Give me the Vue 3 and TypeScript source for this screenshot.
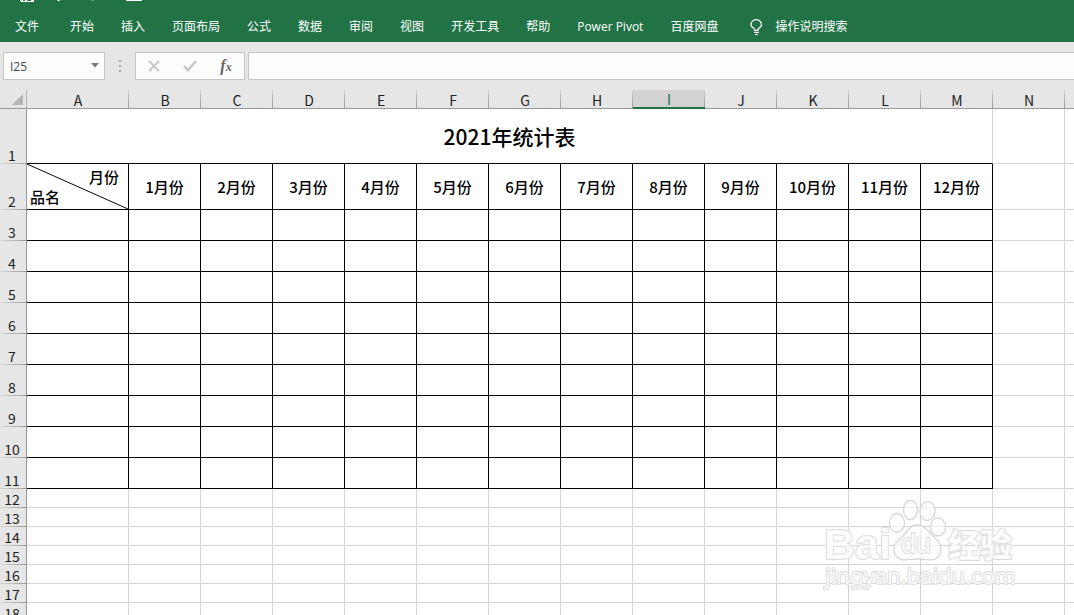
<script setup lang="ts">
import { ref } from 'vue'

interface Row {
  n: number
  kind: 'tall' | 'short'
}

const tabs: string[] = ['文件', '开始', '插入', '页面布局', '公式', '数据', '审阅', '视图', '开发工具', '帮助', 'Power Pivot', '百度网盘']
const columns: string[] = 'ABCDEFGHIJKLMN'.split('')
const months: string[] = Array.from({ length: 12 }, (_, i) => `${i + 1}月份`)
const rows: Row[] = Array.from({ length: 16 }, (_, i) => {
  const n = i + 3
  return { n, kind: n <= 11 ? 'tall' : 'short' }
})
const cellName = ref('I25')
const formula = ref('')
</script>

<template>
  <div class="app">
    <header class="ribbon">
      <svg class="quick" width="160" height="3" viewBox="0 0 160 3" aria-hidden="true">
        <path d="M20 0h14v2h-13zM57 0h3v1h-2zM126 0h16v1h-16z" fill="#fff" />
        <path d="M23 0h2v1h-2zM27 0h4v1h-4z" fill="#217346" />
        <path d="M91 0h3v1h-3z" fill="#5c9a78" />
      </svg>
      <nav class="tabs">
        <button v-for="t in tabs" :key="t" type="button" class="tab">{{ t }}</button>
        <button type="button" class="tab tell">
          <svg width="13" height="17" viewBox="0 0 13 17" fill="none" stroke="#fff" aria-hidden="true">
            <path d="M4.500 11.500v-1.300C3.200 8.800 1 7.900 1 5.700a5.200 5 0 0 1 10.500 0c0 2.200-2.200 3.100-3.500 4.500v1.300z" stroke-width="1.300" />
            <path d="M4 13.500h5M5 15.500h3" />
          </svg>
          <span>操作说明搜索</span>
        </button>
      </nav>
    </header>

    <div class="formula-bar">
      <div class="name-box">
        <input v-model="cellName" type="text" aria-label="名称框" />
        <button type="button" aria-label="展开名称框">
          <svg width="8" height="6" viewBox="0 0 8 6"><path d="M0 0h8L4 4.500z" fill="#777" /></svg>
        </button>
      </div>
      <svg class="grip" width="2" height="12" viewBox="0 0 2 12" fill="#a6a6a6" aria-hidden="true">
        <path d="M0 0h2v2H0zM0 5h2v2H0zM0 10h2v2H0z" />
      </svg>
      <div class="actions">
        <button type="button" aria-label="取消">
          <svg width="12" height="12" viewBox="0 0 12 12"><path d="M1 1l10 10M11 1L1 11" stroke="#c4c4c4" stroke-width="1.800" /></svg>
        </button>
        <button type="button" aria-label="输入">
          <svg width="14" height="12" viewBox="0 0 14 12"><path d="M1 6l4 4.200L13 1" fill="none" stroke="#c4c4c4" stroke-width="2.400" /></svg>
        </button>
        <button type="button" class="fx" aria-label="插入函数"><i>f</i><i class="x">x</i></button>
      </div>
      <input v-model="formula" class="formula" type="text" aria-label="编辑栏" />
    </div>

    <main class="sheet">
      <table>
        <colgroup>
          <col class="c-num" />
          <col class="c-first" />
          <col v-for="c in 13" :key="c" class="c-std" />
          <col />
        </colgroup>
        <thead>
          <tr>
            <th class="corner"><svg width="12" height="12" viewBox="0 0 12 12" aria-hidden="true"><path d="M11 0v11H0z" fill="#b2b2b2" /></svg></th>
            <th v-for="c in columns" :key="c" scope="col" class="col" :class="{ active: c === 'I' }">{{ c }}</th>
            <th class="col last"></th>
          </tr>
        </thead>
        <tbody>
          <tr class="title">
            <th scope="row" class="num">1</th>
            <td colspan="13" class="heading">2021年统计表</td>
            <td></td>
            <td></td>
          </tr>
          <tr class="head">
            <th scope="row" class="num">2</th>
            <td class="ink split">
              <svg viewBox="0 0 102 46" preserveAspectRatio="none" aria-hidden="true"><path d="M0 0L102 46" stroke="#000" /></svg>
              <div class="labels"><span class="top">月份</span><span>品名</span></div>
            </td>
            <td v-for="m in months" :key="m" class="ink">{{ m }}</td>
            <td></td>
            <td></td>
          </tr>
          <tr v-for="r in rows" :key="r.n" :class="r.kind">
            <th scope="row" class="num">{{ r.n }}</th>
            <td v-for="c in 13" :key="c" :class="{ ink: r.kind === 'tall' }"></td>
            <td></td>
            <td></td>
          </tr>
        </tbody>
      </table>

      <svg class="watermark" width="200" height="100" viewBox="0 0 200 100" aria-hidden="true">
        <g fill="#fff" fill-opacity="0.6" stroke="#d6d6d6" stroke-width="1.300">
          <ellipse cx="74" cy="27" rx="7.500" ry="9.500" />
          <ellipse cx="87.500" cy="14" rx="7" ry="9.700" />
          <ellipse cx="104.500" cy="15" rx="7.500" ry="9.500" transform="rotate(8 104.500 15)" />
          <ellipse cx="115" cy="31" rx="7.500" ry="9" />
          <path d="M94 29c-8 0-10 8-16 13-6 4-9 10-6 16 4 9 14 5 22 5s19 4 23-5c3-7 0-12-5-16-6-5-9-13-18-13z" />
        </g>
        <g class="outline">
          <text x="1" y="63" font-size="43" class="latin">Bai</text>
          <text x="78" y="57" font-size="27" class="latin du">du</text>
          <text x="125" y="61" font-size="32" class="cjk">经验</text>
          <text x="2" y="88" font-size="22" class="url">jingyan.baidu.com</text>
        </g>
      </svg>
    </main>
  </div>
</template>

<style>
body {
  margin: 0;
}
</style>

<style scoped>
.app {
  height: 100vh;
  display: flex;
  flex-direction: column;
  overflow: hidden;
  background: #e6e6e6;
  color: #000;
  font-family: "Noto Sans CJK SC", "Noto Sans", sans-serif;
}
button, input {
  font: inherit;
  color: inherit;
  border: 0;
  padding: 0;
  background: none;
}
.ribbon {
  flex: none;
  height: 42px;
  background: #217346;
  color: #fff;
  display: flex;
  flex-direction: column;
}
.quick {
  display: block;
}
.tabs {
  display: flex;
  align-items: center;
  gap: 27px;
  padding: 14px 0 0 15px;
  font-family: "Open Sans", "Noto Sans CJK SC", sans-serif;
  font-size: 12px;
  line-height: 20px;
}
.tab {
  white-space: nowrap;
}
.tab:first-child {
  margin-right: 4px;
}
.tell {
  display: flex;
  align-items: center;
  gap: 12px;
  margin-left: 5px;
}
.formula-bar {
  flex: none;
  display: flex;
  align-items: center;
  padding: 10px 0 10px 3px;
}
.name-box, .actions, .formula {
  box-sizing: border-box;
  height: 28px;
  border: 1px solid #c6c6c6;
  background: #fdfdfd;
}
.name-box {
  width: 102px;
  display: flex;
  align-items: center;
  padding: 0 5px 0 6px;
}
.name-box input {
  flex: 1;
  min-width: 0;
  font-family: "Open Sans", sans-serif;
  font-size: 12px;
  color: #444;
}
.name-box button {
  display: flex;
}
.grip {
  margin: 0 14px;
}
.actions {
  width: 110px;
  display: flex;
  align-items: center;
}
.actions button {
  flex: 1;
  display: flex;
  align-items: center;
  justify-content: center;
}
.actions .fx {
  font-family: "Liberation Serif", serif;
  font-size: 16px;
  line-height: 16px;
  font-weight: bold;
  color: #666;
}
.fx .x {
  font-size: 12px;
  padding-top: 2px;
}
.formula {
  flex: 1;
  min-width: 0;
  margin-left: 3px;
  padding: 0 6px;
  border-right: 0;
  font-size: 12px;
}
.sheet {
  flex: 1;
  min-height: 0;
  overflow: hidden;
  position: relative;
}
table {
  width: 100%;
  table-layout: fixed;
  border-collapse: separate;
  border-spacing: 0;
  background: #fff;
}
.c-num {
  width: 27px;
}
.c-first {
  width: 102px;
}
.c-std {
  width: 72px;
}
th, td {
  box-sizing: border-box;
  padding: 0;
  font-weight: normal;
}
td {
  border-right: 1px solid #d4d4d4;
  border-bottom: 1px solid #d4d4d4;
  text-align: center;
  font-size: 15px;
  line-height: 20px;
}
td:last-child {
  border-right: 0;
}
thead th {
  height: 19px;
  background: #e6e6e6;
  border-bottom: 1px solid #999;
}
.corner {
  text-align: right;
  border-right: 1px solid #b2b2b2;
}
.corner svg {
  display: block;
  margin: 2px 2px 0 auto;
}
.col {
  font-size: 14px;
  line-height: 16px;
  padding-top: 2px;
  color: #222;
  background: linear-gradient(#d0d0d0, #999) right / 1px 100% no-repeat #e6e6e6;
}
.col.last {
  background: #e6e6e6;
}
.col.active {
  background-color: #d2d2d2;
  color: #217346;
  line-height: 15px;
  border-bottom: 2px solid #217346;
}
.num {
  border-right: 1px solid #999;
  background: linear-gradient(90deg, #d8d8d8, #999) bottom / 100% 1px no-repeat #e6e6e6;
  font-size: 14px;
  line-height: 16px;
  vertical-align: bottom;
  text-align: center;
  padding: 0 2px 1px 0;
  color: #222;
}
.title > * {
  height: 55px;
}
.head > * {
  height: 46px;
}
.tall > * {
  height: 31px;
}
.short > * {
  height: 19px;
}
.heading {
  font-size: 21px;
  line-height: 30px;
  font-weight: 500;
  border-bottom-color: #000;
}
.ink {
  border-color: #000;
}
.head .ink {
  font-weight: 500;
}
.split {
  position: relative;
}
.split svg {
  position: absolute;
  inset: 0;
  width: 100%;
  height: 100%;
}
.labels {
  display: flex;
  flex-direction: column;
  align-items: flex-start;
  padding: 0 9px 0 3px;
}
.top {
  align-self: flex-end;
}
.watermark {
  position: absolute;
  right: 51px;
  top: 406px;
}
.outline {
  fill: #fff;
  fill-opacity: 0.8;
  stroke: #dedede;
  stroke-width: 2px;
  paint-order: stroke;
}
.latin {
  font-family: "Liberation Sans", sans-serif;
  font-weight: bold;
}
.latin.du {
  font-weight: normal;
}
.cjk {
  font-family: "Noto Sans CJK SC", sans-serif;
  font-weight: 900;
}
.url {
  font-family: "Noto Sans", sans-serif;
}
</style>
